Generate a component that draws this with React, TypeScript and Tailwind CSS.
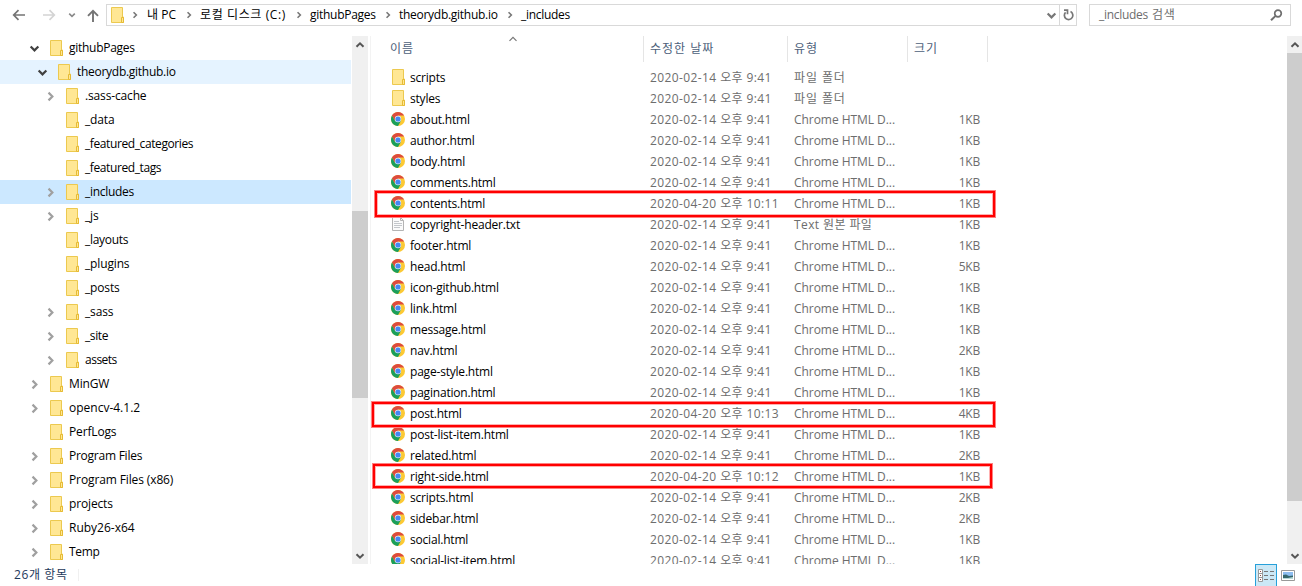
import React from "react";

type TreeItem = { name: string; depth: number; state?: "open" | "closed"; bg?: string; tracking?: string };

const tree: TreeItem[] = [
  { name: "githubPages", depth: 0, state: "open", tracking: "tracking-[-0.27px]" },
  { name: "theorydb.github.io", depth: 1, state: "open", bg: "bg-[#e5f3ff]", tracking: "tracking-[-0.28px]" },
  { name: ".sass-cache", depth: 2, state: "closed" },
  { name: "_data", depth: 2 },
  { name: "_featured_categories", depth: 2, tracking: "tracking-[-0.4px]" },
  { name: "_featured_tags", depth: 2, tracking: "tracking-[-0.4px]" },
  { name: "_includes", depth: 2, state: "closed", bg: "bg-[#cce8ff]", tracking: "tracking-[-0.3px]" },
  { name: "_js", depth: 2, state: "closed" },
  { name: "_layouts", depth: 2, tracking: "tracking-[-0.3px]" },
  { name: "_plugins", depth: 2 },
  { name: "_posts", depth: 2 },
  { name: "_sass", depth: 2, state: "closed" },
  { name: "_site", depth: 2, state: "closed", tracking: "tracking-[-0.4px]" },
  { name: "assets", depth: 2, state: "closed", tracking: "tracking-[-0.5px]" },
  { name: "MinGW", depth: 0, state: "closed" },
  { name: "opencv-4.1.2", depth: 0, state: "closed", tracking: "tracking-normal" },
  { name: "PerfLogs", depth: 0 },
  { name: "Program Files", depth: 0, state: "closed", tracking: "tracking-[-0.25px]" },
  { name: "Program Files (x86)", depth: 0, state: "closed", tracking: "tracking-[-0.12px]" },
  { name: "projects", depth: 0, state: "closed" },
  { name: "Ruby26-x64", depth: 0, state: "closed", tracking: "tracking-normal" },
  { name: "Temp", depth: 0, state: "closed", tracking: "tracking-[-0.3px]" },
];

type FileItem = { name: string; kind: "folder" | "html" | "txt"; size?: string; date?: string };

const files: FileItem[] = [
  { name: "scripts", kind: "folder" },
  { name: "styles", kind: "folder" },
  { name: "about.html", kind: "html", size: "1KB" },
  { name: "author.html", kind: "html", size: "1KB" },
  { name: "body.html", kind: "html", size: "1KB" },
  { name: "comments.html", kind: "html", size: "1KB" },
  { name: "contents.html", kind: "html", size: "1KB", date: "2020-04-20 오후 10:11" },
  { name: "copyright-header.txt", kind: "txt", size: "1KB" },
  { name: "footer.html", kind: "html", size: "1KB" },
  { name: "head.html", kind: "html", size: "5KB" },
  { name: "icon-github.html", kind: "html", size: "1KB" },
  { name: "link.html", kind: "html", size: "1KB" },
  { name: "message.html", kind: "html", size: "1KB" },
  { name: "nav.html", kind: "html", size: "2KB" },
  { name: "page-style.html", kind: "html", size: "1KB" },
  { name: "pagination.html", kind: "html", size: "1KB" },
  { name: "post.html", kind: "html", size: "4KB", date: "2020-04-20 오후 10:13" },
  { name: "post-list-item.html", kind: "html", size: "1KB" },
  { name: "related.html", kind: "html", size: "2KB" },
  { name: "right-side.html", kind: "html", size: "1KB", date: "2020-04-20 오후 10:12" },
  { name: "scripts.html", kind: "html", size: "2KB" },
  { name: "sidebar.html", kind: "html", size: "2KB" },
  { name: "social.html", kind: "html", size: "1KB" },
  { name: "social-list-item.html", kind: "html", size: "1KB" },
];

const typeNames = { folder: "파일 폴더", html: "Chrome HTML D...", txt: "Text 원본 파일" };
const typeTracking = { folder: "tracking-[0.9px]", html: "tracking-[-0.05px]", txt: "tracking-[0.4px]" };
const indents = ["pl-[29px]", "pl-[37px]", "pl-[45px]"];

function FolderIcon() {
  return (
    <svg width="13" height="16" viewBox="0 0 13 16" className="shrink-0">
      <path d="M.5.5h11v9.5h1v5.5H.5z" fill="#ffe794" stroke="#ecc94f" />
      <path d="M10.5 15.5v-5h2v5z" fill="#ffe794" stroke="#e6bb35" />
    </svg>
  );
}

function ChromeIcon() {
  return (
    <svg width="14" height="14" viewBox="0 0 14 14" className="shrink-0">
      <circle cx="7" cy="7" r="7" fill="#fcc934" />
      <path d="M.94 3.5A7 7 0 0 1 13.06 3.5H7L4 8.7z" fill="#dd4b3e" />
      <path d="M.94 3.5A7 7 0 0 0 7 14l3-5.2L7 7 4 8.7z" fill="#1a9f5c" />
      <circle cx="7" cy="7" r="3.2" fill="#e8eef8" />
      <circle cx="7" cy="7" r="2.6" fill="#4587f3" />
    </svg>
  );
}

function TextIcon() {
  return (
    <svg width="12" height="14" viewBox="0 0 12 14" className="shrink-0">
      <path d="M.5.5h8l3 3v10H.5z" fill="#fbfbfb" stroke="#b4b4b4" />
      <path d="M8.5.5v3h3" fill="none" stroke="#b4b4b4" />
      <path d="M2 4.500h5M2 6.500h8M2 8.500h8M2 10.500h6" stroke="#c4c7cb" />
    </svg>
  );
}

function Chevron({ dir, className, size = 10, width = 2 }: { dir: "up" | "down" | "right"; className?: string; size?: number; width?: number }) {
  const d = { up: "M1.500 6.800 5 3.300 8.500 6.800", down: "M1.500 3.200 5 6.700 8.500 3.200", right: "M3.200 1.500 6.700 5 3.200 8.500" }[dir];
  return (
    <svg width={size} height={size} viewBox="0 0 10 10" fill="none" stroke="currentColor" strokeWidth={width} className={className}>
      <path d={d} />
    </svg>
  );
}

function Crumb({ children, className }: { children: React.ReactNode; className: string }) {
  return (
    <>
      <Chevron dir="right" size={8} className="shrink-0 text-[#777]" />
      <span className={`shrink-0 ${className}`}>{children}</span>
    </>
  );
}

function NavigationBar() {
  return (
    <div className="flex h-[36px] shrink-0 items-start pt-[4px]">
      <div className="flex h-[22px] w-[106px] shrink-0 items-center pl-[12px]">
        <svg width="14" height="12" viewBox="0 0 14 12" fill="none" stroke="#747474" strokeWidth="1.700"><path d="M13 6H2M6.500 1.200 1.700 6l4.800 4.800" /></svg>
        <svg width="14" height="12" viewBox="0 0 14 12" fill="none" stroke="#d4d4d4" strokeWidth="1.700" className="ml-[16px]"><path d="M1 6h11M7.500 1.200 12.300 6l-4.800 4.800" /></svg>
        <Chevron dir="down" size={8} className="ml-[12px] text-[#8a8a8a]" />
        <svg width="12" height="13" viewBox="0 0 12 13" fill="none" stroke="#747474" strokeWidth="1.900" className="ml-[11px]"><path d="M6 13V2M1 6.800 6 1.800l5 5" /></svg>
      </div>
      <div className="flex h-[22px] w-[971px] shrink-0 items-center border border-[#d9d9d9] pl-[4px]">
        <FolderIcon />
        <div className="ml-[7px] flex items-center whitespace-pre text-black">
          <Crumb className="ml-[8px] w-[38px]">내 PC</Crumb>
          <Crumb className="ml-[7px] w-[95px] tracking-[0.6px]">로컬 디스크 (C:)</Crumb>
          <Crumb className="ml-[7px] w-[74px] tracking-[-0.27px]">githubPages</Crumb>
          <Crumb className="ml-[7px] w-[107px] tracking-[-0.28px]">theorydb.github.io</Crumb>
          <Crumb className="ml-[7px] tracking-[-0.3px]">_includes</Crumb>
        </div>
        <Chevron dir="down" size={11} className="ml-auto mr-[2px] text-[#777]" />
        <div className="flex h-full w-[17px] items-center justify-center border-l border-[#d9d9d9]">
          <svg width="11" height="12" viewBox="0 0 11 12" fill="none" stroke="#777" strokeWidth="1.700"><path d="M7.500 2.600A4.200 4.200 0 1 1 2.600 3.400M1 1.200h3.500v4" /></svg>
        </div>
      </div>
      <div className="ml-[12px] flex h-[22px] w-[202px] shrink-0 items-center border border-[#d9d9d9] pl-[9px] pr-[7px] text-[#6d6d6d]">
        <span className="whitespace-pre"><span className="tracking-[-0.3px]">_includes</span><span className="tracking-[0.9px]"> 검색</span></span>
        <svg width="13" height="12" viewBox="0 0 13 12" fill="none" stroke="#6f6f6f" strokeWidth="1.700" className="ml-auto"><circle cx="8" cy="4.500" r="3.300" /><path d="M5.600 6.900 1 11.300" strokeWidth="2" /></svg>
      </div>
    </div>
  );
}

function Tree() {
  return (
    <div className="w-[351px] shrink-0">
      {tree.map((t) => (
        <div key={t.name} className={`flex h-[24px] items-center ${indents[t.depth]} ${t.bg ?? ""}`}>
          <div className="w-[21px] shrink-0">
            {t.state && <Chevron dir={t.state === "open" ? "down" : "right"} size={11} className={t.state === "open" ? "text-[#404040]" : "text-[#a0a0a0]"} />}
          </div>
          <FolderIcon />
          <span className={`ml-[6px] whitespace-pre pb-[1px] text-black ${t.tracking ?? "tracking-[-0.15px]"}`}>{t.name}</span>
        </div>
      ))}
    </div>
  );
}

function Scrollbar({ thumb, className }: { thumb: string; className: string }) {
  return (
    <div className={`flex shrink-0 flex-col items-center bg-[#f0f0f0] ${className}`}>
      <Chevron dir="up" className="mt-[4px] shrink-0 text-[#555]" />
      <div className={`w-full shrink-0 bg-[#cdcdcd] ${thumb}`} />
      <Chevron dir="down" className="mb-[3px] mt-auto shrink-0 text-[#555]" />
    </div>
  );
}

function FileList() {
  return (
    <div className="flex-1 overflow-hidden">
      <div className="flex h-[26px] tracking-[1px] text-[#4c607a]">
        <div className="relative flex w-[273px] items-center border-r border-[#e5e5e5] pl-[19px]">
          이름
          <Chevron dir="up" size={10} width={1.2} className="absolute left-[137px] top-[-2px] text-[#777]" />
        </div>
        <div className="flex w-[144px] items-center border-r border-[#e5e5e5] pl-[6px]">수정한 날짜</div>
        <div className="flex w-[120px] items-center border-r border-[#e5e5e5] pl-[6px]">유형</div>
        <div className="flex w-[80px] items-center border-r border-[#e5e5e5] pl-[6px]">크기</div>
      </div>
      <div className="pt-[5px]">
        {files.map((f) => (
          <div key={f.name} className="flex h-[21px] items-center whitespace-pre text-[#6d6d6d]">
            <div className={`flex w-[39px] shrink-0 items-center pb-px ${f.kind === "html" ? "pl-[20px]" : "pl-[21px]"}`}>
              {f.kind === "folder" ? <FolderIcon /> : f.kind === "html" ? <ChromeIcon /> : <TextIcon />}
            </div>
            <span className="w-[240px] shrink-0 tracking-[-0.2px] text-black">{f.name}</span>
            <span className="w-[144px] shrink-0 tracking-[0.4px]">{f.date ?? "2020-02-14 오후 9:41"}</span>
            <span className={`w-[120px] shrink-0 ${typeTracking[f.kind]}`}>{typeNames[f.kind]}</span>
            <span className="w-[66px] shrink-0 text-right tracking-[-0.2px]">{f.size}</span>
          </div>
        ))}
      </div>
    </div>
  );
}

function Highlight({ className }: { className: string }) {
  return (
    <div className={`absolute border border-[#ff8080] ${className}`}>
      <div className="h-full border-2 border-[#ff0000]">
        <div className="h-full border border-[#ffb0b0]" />
      </div>
    </div>
  );
}

function StatusBar() {
  return (
    <div className="flex h-[22px] shrink-0 items-center pl-[14px] text-[#1e395b]">
      <span className="w-[64px] tracking-[0.6px]">26개 항목</span>
      <div className="h-[12px] w-px bg-[#f0f0f0]" />
      <div className="ml-auto flex h-[22px] w-[22px] items-center justify-center border border-b-0 border-[#26a0da] bg-[#cbe8f6]">
        <svg width="16" height="13" viewBox="0 0 16 13" fill="none">
          <path d="M.5.500h4v12h-4zM.5 4.500h4M.5 8.500h4" fill="#fff" stroke="#999" />
          <path d="M6 2.500h4M12 2.500h4M6 6.500h4M12 6.500h4M6 10.500h4M12 10.500h4" stroke="#777" />
          <path d="M2 2.500h1M2 6.500h1M2 10.500h1" stroke="#8a4a4a" />
        </svg>
      </div>
      <svg width="14" height="11" viewBox="0 0 14 11" className="ml-[4px] mr-[7px]">
        <path d="M.5.500h13v10H.5z" fill="#fff" stroke="#999" />
        <path d="M2 2h10v7H2z" fill="#8dbdf0" />
        <path d="M2 5l3-.5 3 1.500 4-.5v3.500H2z" fill="#35676d" />
        <path d="M2 8h5l5-1v2H2z" fill="#b8d9d8" />
      </svg>
    </div>
  );
}

export default function App() {
  return (
    <div className="relative flex h-[586px] w-[1302px] flex-col overflow-hidden bg-white font-['Open_Sans','Noto_Sans_CJK_KR',sans-serif] text-[12px] leading-[20px]">
      <NavigationBar />
      <div className="flex h-[528px] shrink-0 overflow-hidden">
        <Tree />
        <Scrollbar className="ml-px w-[16px]" thumb="mt-[161px] h-[187px]" />
        <div className="ml-[2px] w-px bg-[#f3f3f3]" />
        <FileList />
        <Scrollbar className="w-[15px]" thumb="mt-[3px] h-[448px]" />
      </div>
      <StatusBar />
      <Highlight className="left-[374px] top-[190px] h-[28px] w-[622px]" />
      <Highlight className="left-[371px] top-[401px] h-[27px] w-[625px]" />
      <Highlight className="left-[372px] top-[463px] h-[26px] w-[621px]" />
    </div>
  );
}
